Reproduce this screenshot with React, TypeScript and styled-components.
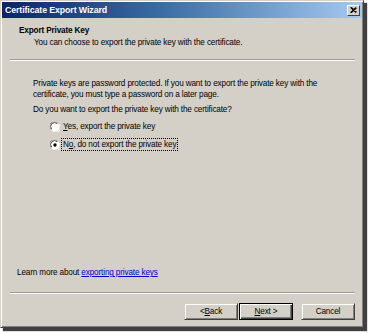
import styled, { createGlobalStyle } from 'styled-components'

const GlobalStyle = createGlobalStyle`
  html, body {
    margin: 0;
    padding: 0;
    background: #ffffff;
  }
  body {
    font-family: "Liberation Sans", Arial, sans-serif;
    font-size: 8.2px;
    letter-spacing: -0.15px;
    color: #000;
  }
`

const Page = styled.div`
  width: 370px;
  height: 333px;
  overflow: hidden;
`

const Window = styled.div`
  width: 364px;
  height: 328px;
  box-sizing: border-box;
  display: flex;
  flex-direction: column;
  background: #d4d0c8;
  border: 1px solid;
  border-color: #d4d0c8 #404040 #404040 #d4d0c8;
  box-shadow: inset 1px 1px 0 #ffffff, inset -1px -1px 0 #808080, 3px 3px 1px rgba(0, 0, 0, 0.75);
  padding: 1px;
`

const TitleBar = styled.div`
  height: 16px;
  display: flex;
  align-items: center;
  justify-content: space-between;
  padding: 0 2px 0 3px;
  background: linear-gradient(90deg, #0a246a 0%, #3a6ea5 45%, #a6caf0 100%);
`

const TitleText = styled.span`
  color: #ffffff;
  font-weight: bold;
  font-size: 8.8px;
  letter-spacing: -0.1px;
`

const CloseButton = styled.div`
  width: 13px;
  height: 11px;
  display: flex;
  align-items: center;
  justify-content: center;
  background: #d4d0c8;
  box-sizing: border-box;
  border: 1px solid;
  border-color: #ffffff #404040 #404040 #ffffff;
`

const Header = styled.div`
  padding: 7px 0 0 17px;
  height: 34px;
`

const HeaderTitle = styled.div`
  font-weight: bold;
  line-height: 12px;
`

const HeaderSub = styled.div`
  padding-left: 15px;
  line-height: 12px;
`

const Separator = styled.div`
  margin: 0 7px 0 8px;
  border-top: 1px solid #a09c94;
  border-bottom: 1px solid #ffffff;
`

const Body = styled.div`
  flex: 1;
  display: flex;
  flex-direction: column;
  padding: 17px 16px 0 31px;
`

const Paragraph = styled.p`
  margin: 0 0 4px;
  line-height: 11px;
`

const Options = styled.div`
  display: flex;
  flex-direction: column;
  gap: 7px;
  padding: 2px 0 0 17px;
`

const Option = styled.label`
  display: flex;
  align-items: center;
  gap: 2px;
  line-height: 11px;
`

const OptionText = styled.span<{ focused?: boolean }>`
  padding: 0 1px;
  outline: ${({ focused }) => (focused ? '1px dotted #000' : 'none')};
`

const LearnMore = styled.div`
  margin-top: auto;
  margin-left: -16px;
  margin-bottom: 14px;
  line-height: 11px;
`

const Link = styled.a`
  color: #0000cc;
  text-decoration: underline;
`

const Footer = styled.div`
  display: flex;
  justify-content: flex-end;
  padding: 9px 7px 6px 0;
`

const Button = styled.div<{ primary?: boolean; gapLeft?: number }>`
  width: 54px;
  height: 17px;
  box-sizing: border-box;
  display: flex;
  align-items: center;
  justify-content: center;
  margin-left: ${({ gapLeft }) => gapLeft ?? 0}px;
  background: #d4d0c8;
  border: 1px solid;
  border-color: ${({ primary }) => (primary ? '#000' : '#d4d0c8 #404040 #404040 #d4d0c8')};
  box-shadow: ${({ primary }) =>
    primary
      ? 'inset 1px 1px 0 #ffffff, inset -1px -1px 0 #404040, inset -2px -2px 0 #808080'
      : 'inset 1px 1px 0 #ffffff, inset -1px -1px 0 #808080'};
`

const Radio = ({ checked }: { checked?: boolean }) => (
  <svg width="10" height="10" viewBox="0 0 12 12">
    <circle cx="6" cy="6" r="5.5" fill="#ffffff" />
    <path d="M1.2 9 A5.2 5.2 0 0 1 9 1.2" fill="none" stroke="#808080" strokeWidth="1" />
    <path d="M2.2 8.6 A4.2 4.2 0 0 1 8.6 2.2" fill="none" stroke="#404040" strokeWidth="1" />
    <path d="M3 10.8 A5.2 5.2 0 0 0 10.8 3" fill="none" stroke="#ffffff" strokeWidth="1" />
    {checked && <circle cx="6" cy="6" r="2" fill="#000" />}
  </svg>
)

const CloseIcon = () => (
  <svg width="7" height="6" viewBox="0 0 8 7">
    <path d="M0.5 0.5 L7 6.5 M1.5 0.5 L7.5 6 M7 0.5 L0.5 6.5 M7.5 1 L1.5 6.5" stroke="#000" strokeWidth="1.2" />
  </svg>
)

export default function App() {
  return (
    <Page>
      <GlobalStyle />
      <Window>
        <TitleBar>
          <TitleText>Certificate Export Wizard</TitleText>
          <CloseButton>
            <CloseIcon />
          </CloseButton>
        </TitleBar>
        <Header>
          <HeaderTitle>Export Private Key</HeaderTitle>
          <HeaderSub>You can choose to export the private key with the certificate.</HeaderSub>
        </Header>
        <Separator />
        <Body>
          <Paragraph>
            Private keys are password protected. If you want to export the private key with the
            certificate, you must type a password on a later page.
          </Paragraph>
          <Paragraph>Do you want to export the private key with the certificate?</Paragraph>
          <Options>
            <Option>
              <Radio />
              <OptionText>
                <u>Y</u>es, export the private key
              </OptionText>
            </Option>
            <Option>
              <Radio checked />
              <OptionText focused>
                N<u>o</u>, do not export the private key
              </OptionText>
            </Option>
          </Options>
          <LearnMore>
            Learn more about <Link>exporting private keys</Link>
          </LearnMore>
        </Body>
        <Separator />
        <Footer>
          <Button>
            &lt; <u>B</u>ack
          </Button>
          <Button primary gapLeft={1}>
            <u>N</u>ext &gt;
          </Button>
          <Button gapLeft={8}>Cancel</Button>
        </Footer>
      </Window>
    </Page>
  )
}
